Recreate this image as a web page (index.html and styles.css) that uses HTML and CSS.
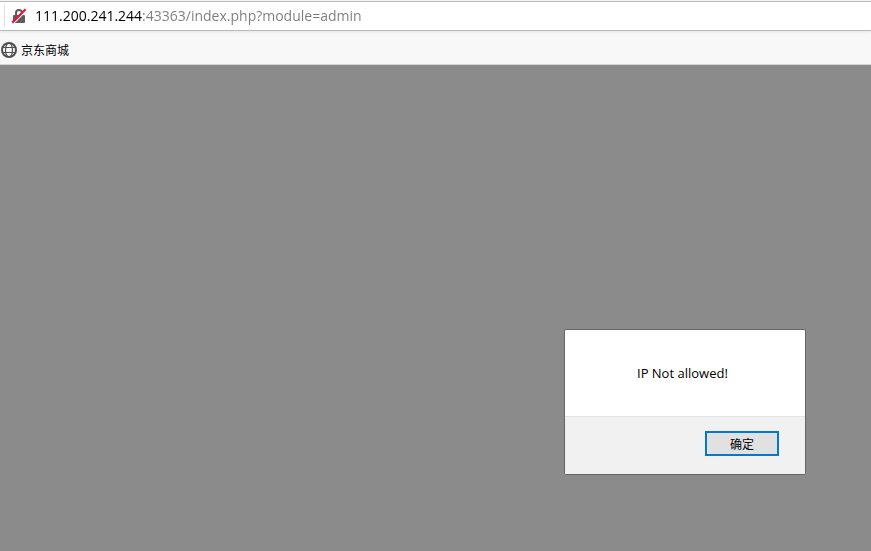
FILE: index.html
```html
<!DOCTYPE html>
<html lang="zh-CN">
<head>
<meta charset="utf-8">
<meta name="viewport" content="width=device-width, initial-scale=1">
<title>111.200.241.244:43363</title>
<link rel="stylesheet" href="styles.css">
</head>
<body>
<header class="chrome">
  <form class="address-bar">
    <span class="identity">
      <svg class="lock" viewBox="0 0 16 16" aria-hidden="true">
        <path d="M5 8V5a3 3 0 0 1 6 0V8" fill="none" stroke="#5c5c5c" stroke-width="2"/>
        <rect x="2" y="7" width="12" height="8" rx="1" fill="#5c5c5c"/>
        <path d="M2.4 15.4 15.4 2.4" stroke="#fff" stroke-width="1.4"/>
        <path d="M1.2 14.6 14.6 1.2" stroke="#f0103e" stroke-width="2.2"/>
      </svg>
    </span>
    <input class="url" type="text" aria-label="网址" value="111.200.241.244:43363/index.php?module=admin">
  </form>
  <nav class="bookmarks">
    <a class="bookmark" href="#">
      <svg class="globe" viewBox="0 0 16 16" fill="none" stroke="#505050" aria-hidden="true">
        <circle cx="8" cy="8" r="7" stroke-width="2"/>
        <ellipse cx="8" cy="8" rx="3.5" ry="7" stroke-width="1.2"/>
        <path d="M2 5.5h12M2 10.5h12" stroke-width="1.2"/>
      </svg>
      <span>京东商城</span>
    </a>
  </nav>
</header>
<main class="page">
  <section class="dialog" role="alertdialog" aria-modal="true" aria-labelledby="message">
    <p class="message" id="message">IP Not allowed!</p>
    <footer class="actions">
      <button class="confirm" type="button">确定</button>
    </footer>
  </section>
</main>
</body>
</html>
```

FILE: styles.css
```css
* {
  box-sizing: border-box;
}

body {
  margin: 0;
  min-height: 100vh;
  display: flex;
  flex-direction: column;
  font-family: "Open Sans", "Noto Sans CJK SC", sans-serif;
  font-size: 12px;
  color: #000;
}

.chrome {
  padding-top: 1px;
  background: #f8f8f8;
  border-bottom: 1px solid #d2d2d2;
}

.address-bar {
  display: flex;
  align-items: center;
  height: 30px;
  background: #fff;
  border: solid #b9b9b9;
  border-width: 1px 0;
  box-shadow: 0 1px 3px rgba(0, 0, 0, 0.08);
}

.identity {
  display: flex;
  align-items: center;
  height: 22px;
  margin-left: 4px;
  padding-left: 6px;
  border-left: 1px solid #e0e0e0;
}

.lock,
.globe {
  display: block;
  width: 16px;
  height: 16px;
}

.url {
  flex: 1;
  min-width: 0;
  height: 24px;
  margin: 0 8px;
  padding: 0 0 2px;
  border: 0;
  outline: 0;
  font: inherit;
  font-size: 14px;
  color: transparent;
  caret-color: #000;
  background: linear-gradient(to right, #000 107px, #7c7c7c 107px);
  -webkit-background-clip: text;
  background-clip: text;
}

.bookmarks {
  display: flex;
  align-items: center;
  height: 33px;
  padding: 5px 1px 0;
}

.bookmark {
  display: flex;
  align-items: center;
  gap: 4px;
  color: #000;
  text-decoration: none;
}

.page {
  flex: 1;
  display: flex;
  justify-content: flex-end;
  align-items: flex-end;
  padding: 0 65px 76px;
  background: #8b8b8b;
}

.dialog {
  width: 242px;
  border: 1px solid #666;
  border-radius: 2px;
  background: #fff;
  overflow: hidden;
}

.message {
  margin: 0;
  padding: 34px 72px;
  font-size: 13px;
  line-height: 18px;
  white-space: nowrap;
}

.actions {
  display: flex;
  justify-content: flex-end;
  padding: 14px 26px 18px;
  background: #f1f1f1;
  border-top: 1px solid #e3e3e3;
}

.confirm {
  width: 74px;
  height: 25px;
  padding: 0;
  border: 2px solid #0078d7;
  background: #e1e1e1;
  color: #000;
  font: inherit;
}
```
